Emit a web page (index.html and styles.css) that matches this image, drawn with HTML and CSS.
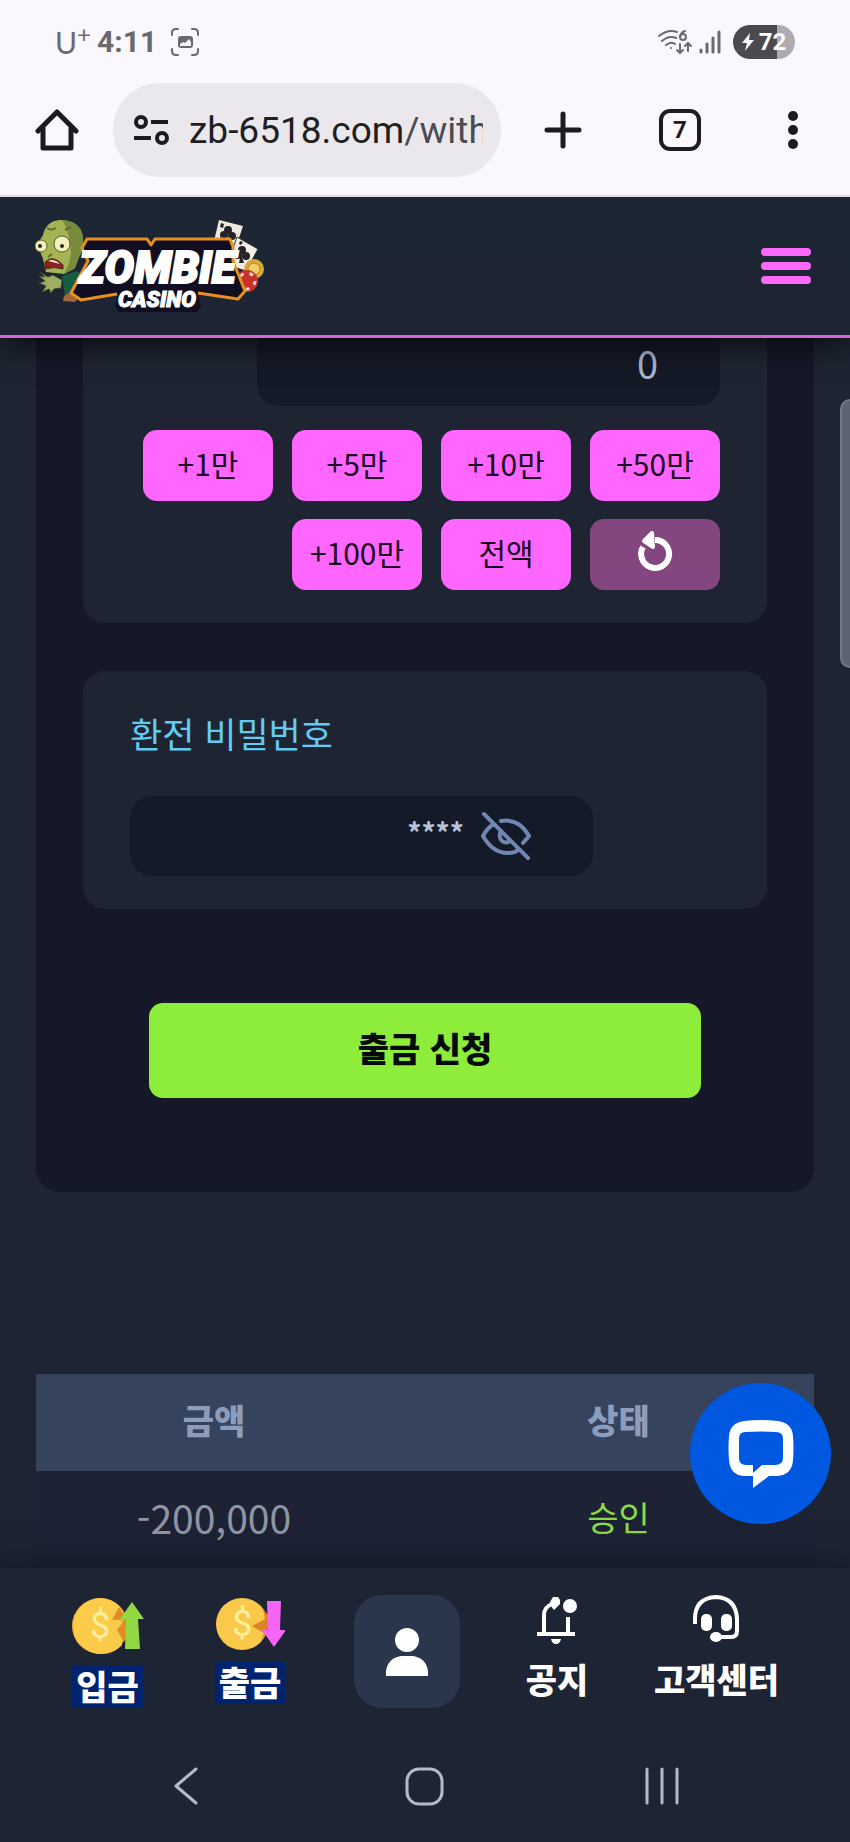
FILE: index.html
```html
<!DOCTYPE html>
<html lang="ko">
<head>
  <meta charset="UTF-8">
  <meta name="viewport" content="width=device-width, initial-scale=1">
  <title>출금 신청</title>
  <link rel="stylesheet" href="styles.css">
</head>
<body>
  <div class="browser">
    <div class="status-bar">
      <span class="carrier">U<sup>+</sup></span>
      <span class="clock">4:11</span>
      <svg class="capture" width="28" height="28" viewBox="0 0 28 28" fill="none" stroke="#6b696d" stroke-width="2" stroke-linecap="round">
        <path d="M1 7V5q0-4 4-4h2M21 1h2q4 0 4 4v2M27 21v2q0 4-4 4h-2M7 27H5q-4 0-4-4v-2"/>
        <rect x="7" y="8" width="15" height="12" rx="3" fill="#6b696d" stroke="none"/>
        <path d="M9 18v-2l3-2 2 1 4-4 2 3v4z" fill="#faf8fc" stroke="none"/>
      </svg>
      <span class="spacer"></span>
      <svg width="34" height="26" viewBox="0 0 34 26" fill="none" stroke="#6b696d" stroke-width="2" stroke-linecap="round">
        <path d="M1 7q9-7 18-4M4 12q7-6 14-3M8 16q5-4 9-1"/>
        <circle cx="13" cy="19" r="1" fill="#6b696d" stroke="none"/>
        <path d="M27 2q-4 1-5 6"/>
        <circle cx="25" cy="8" r="3"/>
        <path d="M22 15v9M19 21l3 3 3-3M30 22v-8M27 17l3-3 3 3"/>
      </svg>
      <svg class="signal" width="22" height="24" viewBox="0 0 22 24" stroke="#6b696d" stroke-width="3" stroke-linecap="round">
        <path d="M2 20v2M8 14v8M14 8v14M20 2v20"/>
      </svg>
      <span class="battery">
        <svg width="12" height="18" viewBox="0 0 12 18" fill="#fff"><path d="M8 0L0 10h5l-2 8 9-11H7z"/></svg>72
      </span>
    </div>
    <div class="toolbar">
      <button class="tool" aria-label="홈">
        <svg width="44" height="44" viewBox="0 0 44 44" fill="none" stroke="#1c1b20" stroke-width="5" stroke-linejoin="round" stroke-linecap="round">
          <path d="M3 23L22 4l19 19M8 20v20h28V20"/>
        </svg>
      </button>
      <a class="omnibox" href="#">
        <svg width="36" height="32" viewBox="0 0 36 32" fill="none" stroke="#1c1b20" stroke-width="4">
          <circle cx="8" cy="8" r="5"/><path d="M18 8h17M1 24h17"/><circle cx="29" cy="24" r="5"/>
        </svg>
        <span class="url">zb-6518.com<span class="path">/withdraw</span></span>
      </a>
      <button class="tool" aria-label="새 탭">
        <svg width="38" height="38" viewBox="0 0 38 38" stroke="#1c1b20" stroke-width="5" stroke-linecap="round"><path d="M19 3v32M3 19h32"/></svg>
      </button>
      <button class="tool tabs" aria-label="탭 7개">7</button>
      <button class="tool" aria-label="메뉴">
        <svg width="30" height="40" viewBox="0 0 30 40" fill="#1c1b20"><circle cx="15" cy="6" r="5"/><circle cx="15" cy="20" r="5"/><circle cx="15" cy="34" r="5"/></svg>
      </button>
    </div>
  </div>

  <header class="site-header">
    <a class="logo" href="#" aria-label="Zombie Casino">
      <svg width="235" height="100" viewBox="0 0 235 100">
        <!-- cards and chips -->
        <path d="M184 4l24 6-8 24-21-9z" fill="#eee9df"/>
        <path d="M202 21l21 12-12 22-19-6z" fill="#f3eee5" stroke="#34302f"/>
        <g fill="#26222a">
          <circle cx="193" cy="14" r="4"/><circle cx="189" cy="19" r="4"/><circle cx="197" cy="20" r="4"/>
          <circle cx="207" cy="34" r="4"/><circle cx="203" cy="39" r="4"/><circle cx="211" cy="40" r="4"/>
          <path d="M206 38l-2 9h5zM186 7l3 1-1 4-3-1zM205 25l3 1-2 3-2-1z"/>
        </g>
        <circle cx="219" cy="53" r="10" fill="#d9a93c"/>
        <circle cx="219" cy="53" r="6" fill="#efcf62" stroke="#b5832a"/>
        <circle cx="212" cy="65" r="11" fill="#c92f2b"/>
        <circle cx="212" cy="65" r="8" fill="none" stroke="#f1d8d0" stroke-width="3" stroke-dasharray="4 6"/>
        <!-- zombie -->
        <path d="M27 60l14-5 10 5-6 22-15-2z" fill="#155c40"/>
        <path d="M5 56l8 5 5-2 9 5-1 8-7 1-3 4-2-4-7 3 4-6-7-3 6-2-6-5 6 1z" fill="#9fae62" stroke="#3f4d2c"/>
        <path d="M8 19Q11 5 25 4q18 0 22 15 3 12-3 22l-4 11-11 6-18-2-3-13-5-13q1-6 5-11z" fill="#a4b455"/>
        <path d="M25 4q20 0 23 16 1 15-5 23l-4 10-10 5q9-15 6-30-2-16-8-24z" fill="#788b3c"/>
        <path d="M12 12q4 3 9 0M17 38l-4 3M30 14l6-3" stroke="#5a6a2d" stroke-width="2" fill="none"/>
        <circle cx="6" cy="30" r="6" fill="#f4efbd" stroke="#56622b"/><circle cx="5" cy="30" r="2" fill="#2a2719"/>
        <circle cx="27" cy="28" r="8" fill="#f4efbd" stroke="#56622b"/><circle cx="27" cy="30" r="2" fill="#2a2719"/>
        <path d="M10 46q8-8 18 3v4q-9-3-18 0z" fill="#8d1f21" stroke="#4a2c1b"/><path d="M13 45q6-3 12 3z" fill="#efe7c5"/>
        <path d="M29 80l6-4 8 6-3 4-12-1z" fill="#a3653b"/>
        <!-- name plate -->
        <path d="M52 23h60l4 5 4-5h75l3 8v14l12 30-7 8-40-6 3 14-4 5H84l-4-6 3-12-37 6-10-7 17-32-6-13z" fill="#100e20"/>
        <path d="M82 78l-36 6-10-7 17-32-6-13 5-9h60l4 6 4-6h75l3 8v14l12 30-7 8-40-6" fill="none" stroke="#e8901f" stroke-width="3" stroke-linejoin="round"/>
        <text class="logo-zombie" x="44" y="67">ZOMBIE</text>
        <text class="logo-casino" x="83" y="91">CASINO</text>
      </svg>
    </a>
    <button class="burger" aria-label="전체 메뉴"><span></span><span></span><span></span></button>
  </header>

  <main>
    <form class="panel">
      <section class="card amount">
        <input class="field amount-input" type="text" value="0" aria-label="출금 금액">
        <div class="quick">
          <button type="button">+1만</button>
          <button type="button">+5만</button>
          <button type="button">+10만</button>
          <button type="button">+50만</button>
          <button type="button">+100만</button>
          <button type="button">전액</button>
          <button type="button" class="reset" aria-label="초기화">
            <svg width="38" height="44" viewBox="0 0 38 44" fill="none" stroke="#fff" stroke-width="6">
              <path d="M7 17a14 14 0 1 0 12-7"/>
              <path d="M16 3L8 11l9 6z" fill="#fff" stroke-width="4" stroke-linejoin="round"/>
            </svg>
          </button>
        </div>
      </section>

      <section class="card">
        <label class="card-title" for="pin">환전 비밀번호</label>
        <div class="field pin-field">
          <input id="pin" type="text" value="****">
          <button type="button" aria-label="비밀번호 보기">
            <svg width="50" height="50" viewBox="0 0 50 50" fill="none" stroke="#7186b0" stroke-width="4" stroke-linecap="round" stroke-linejoin="round">
              <path d="M3 3l44 44M20 10q18-3 28 15l-6 7M13 13Q6 17 2 25q12 21 32 16q2-1 4-3"/>
              <path d="M20 20q-3 6 1 10 4 3 8 0"/>
            </svg>
          </button>
        </div>
      </section>

      <button class="submit" type="submit">출금 신청</button>
    </form>

    <section class="history">
      <div class="table-wrap">
        <table>
          <thead>
            <tr><th class="col-amount">금액</th><th>상태</th></tr>
          </thead>
          <tbody>
            <tr><td>-200,000</td><td class="ok">승인</td></tr>
          </tbody>
        </table>
      </div>
      <button class="chat" aria-label="채팅 상담">
        <svg width="66" height="68" viewBox="0 0 66 68" fill="#fff" fill-rule="evenodd">
          <path d="M16 1Q33-1 50 1q14 2 15 15 1 12 0 24-1 15-16 16h-8L25 68V56h-9Q2 55 1 40 0 28 1 16 2 3 16 1zM17 12q-6 0-6 7v19q0 7 7 7h7v8l9-8h13q8 0 8-7V19q0-7-7-7-15-1-31 0z"/>
        </svg>
      </button>
    </section>
    <div class="scroll-thumb"></div>
  </main>

  <footer class="dock">
    <nav class="menu">
      <a class="item picked" href="#">
        <svg width="72" height="60" viewBox="0 0 72 60">
          <circle cx="28" cy="31" r="28" fill="#f2b33b"/>
          <path d="M28 3a28 28 0 0 1 20 9l-4 12 8 4-2 22A28 28 0 1 1 28 3z" fill="#fbcb49"/>
          <path d="M47 12l-7 13 13-1-8 11 7 12q6-8 4-20z" fill="#e08b25"/>
          <text class="dollar" x="28" y="43">$</text>
          <path d="M60 7l12 17h-6l2 30H53l1-30h-6z" fill="#91d843"/>
        </svg>
        <span>입금</span>
      </a>
      <a class="item picked" href="#">
        <svg width="70" height="56" viewBox="0 0 70 56">
          <circle cx="27" cy="29" r="26" fill="#fbc94a"/>
          <path d="M48 14l2 10-13 7 12 7-3 8q10-14 7-26z" fill="#dc8526"/>
          <text class="dollar" x="27" y="41">$</text>
          <path d="M52 6h14l-1 29h6L59 52 47 35h6z" fill="#f665f6"/>
        </svg>
        <span>출금</span>
      </a>
      <a class="profile" href="#" aria-label="내 정보">
        <svg width="44" height="48" viewBox="0 0 44 48" fill="#fff"><circle cx="22" cy="12" r="12"/><path d="M1 48v-5q2-13 15-15h12q13 2 15 15v5z"/></svg>
      </a>
      <a class="item" href="#">
        <svg width="44" height="53" viewBox="0 0 44 53" fill="none" stroke="#fff" stroke-width="4">
          <path d="M2 39h38M9 38V20q0-8 8-11M33 38V22"/>
          <path d="M15 10V7l3-5h5l2 3v4l-6 6z" fill="#fff" stroke="none"/>
          <path d="M16 44h10q-1 5-5 5t-5-5z" fill="#fff" stroke="none"/>
          <circle cx="35" cy="11" r="7" fill="#fff" stroke="none"/>
        </svg>
        <span>공지</span>
      </a>
      <a class="item" href="#">
        <svg width="46" height="53" viewBox="0 0 46 53" fill="none" stroke="#fff" stroke-width="4">
          <path d="M2 29v-5Q2 3 23 2q20 1 21 22v12q0 6-6 6H24"/>
          <g fill="#fff" stroke="none"><rect x="8" y="19" width="11" height="17" rx="5"/><rect x="28" y="19" width="11" height="17" rx="5"/><ellipse cx="23" cy="42" rx="6" ry="5"/></g>
        </svg>
        <span>고객센터</span>
      </a>
    </nav>
    <div class="system-nav">
      <button aria-label="뒤로"><svg width="40" height="40" viewBox="0 0 40 40"><path d="M30 3L10 20l20 17"/></svg></button>
      <button aria-label="홈 화면"><svg width="40" height="40" viewBox="0 0 40 40"><rect x="2" y="3" width="35" height="35" rx="12"/></svg></button>
      <button aria-label="최근 앱"><svg width="40" height="40" viewBox="0 0 40 40"><path d="M3 3v34M18 3v34M33 3v34"/></svg></button>
    </div>
  </footer>
</body>
</html>
```
FILE: styles.css
```css
* {
  box-sizing: border-box;
}
body {
  margin: 0;
  font-family: 'Noto Sans CJK KR', sans-serif;
  background: #1e2432;
  color: #fff;
}
button {
  padding: 0;
  border: none;
  background: none;
  font-family: inherit;
  cursor: pointer;
}
a {
  color: inherit;
  text-decoration: none;
}
svg {
  display: block;
}

/* browser bars */
.browser {
  position: relative;
  z-index: 3;
  background: #faf8fc;
  border-bottom: 2px solid #dadde7;
  font-family: 'Roboto', sans-serif;
}
.status-bar {
  display: flex;
  align-items: center;
  height: 83px;
  padding: 0 55px;
  color: #6b696d;
}
.carrier {
  font-family: 'Lato', sans-serif;
  font-size: 30px;
  line-height: 28px;
}
.carrier sup {
  font-size: 24px;
  line-height: 0;
}
.clock {
  margin-left: 6px;
  font-size: 30px;
  font-weight: bold;
}
.capture {
  margin-left: 14px;
}
.spacer {
  flex: 1;
}
.signal {
  margin: 0 12px 0 7px;
}
.battery {
  display: flex;
  align-items: center;
  justify-content: center;
  gap: 5px;
  width: 62px;
  height: 34px;
  border-radius: 17px;
  background: linear-gradient(to right, #4c4a4e 71%, #adabae 71%);
  color: #fff;
  font-size: 24px;
  font-weight: bold;
}
.toolbar {
  display: flex;
  align-items: center;
  padding: 0 42px 18px 35px;
}
.omnibox {
  display: flex;
  flex: 1;
  align-items: center;
  gap: 20px;
  min-width: 0;
  height: 94px;
  margin: 0 43px 0 34px;
  padding: 0 18px 0 20px;
  border-radius: 47px;
  background: #eae8ed;
}
.omnibox svg {
  flex-shrink: 0;
}
.url {
  overflow: hidden;
  color: #1f1e23;
  font-size: 37px;
  white-space: nowrap;
}
.path {
  color: #4c4b50;
}
.tool + .tool {
  margin-left: 77px;
}
.tabs {
  width: 42px;
  height: 42px;
  border: 4px solid #1c1b20;
  border-radius: 11px;
  color: #1c1b20;
  font-family: 'Roboto', sans-serif;
  font-size: 24px;
  font-weight: bold;
}

/* site header */
.site-header {
  position: relative;
  z-index: 2;
  display: flex;
  align-items: center;
  justify-content: space-between;
  height: 141px;
  padding: 0 39px 0 35px;
  border-bottom: 3px solid #d766d3;
  background: linear-gradient(#1c2733, #1e2433);
  box-shadow: 0 6px 30px rgba(0, 0, 0, 0.7);
}
.logo-zombie,
.logo-casino {
  fill: #fff;
  stroke: #fff;
  font-family: 'Roboto', sans-serif;
  font-weight: 900;
  font-style: italic;
}
.logo-zombie {
  font-size: 44px;
  stroke-width: 2px;
}
.logo-casino {
  font-size: 22px;
}
.burger {
  display: flex;
  flex-direction: column;
  gap: 6px;
  width: 50px;
}
.burger span {
  height: 8px;
  border-radius: 4px;
  background: #fc69fb;
}

/* withdraw form */
main {
  position: relative;
}
.panel {
  margin: -12px 36px 0;
  padding: 0 47px 94px;
  border-radius: 0 0 24px 24px;
  background: #151827;
}
.card {
  margin-bottom: 48px;
  padding: 37px 47px 33px;
  border-radius: 22px;
  background: #1f2433;
}
.amount {
  display: flex;
  flex-direction: column;
  align-items: flex-end;
  gap: 24px;
  padding-top: 0;
  border-radius: 0 0 22px 22px;
}
.field {
  width: 100%;
  max-width: 463px;
  height: 80px;
  border: none;
  border-radius: 22px;
  background: #151a28;
}
.amount-input {
  padding: 0 62px 8px;
  color: #a8b7cf;
  font-family: inherit;
  font-size: 38px;
  text-align: right;
}
.quick {
  display: flex;
  flex-wrap: wrap;
  justify-content: flex-end;
  gap: 18px 19px;
  width: 100%;
}
.quick button {
  display: flex;
  align-items: center;
  justify-content: center;
  width: 130px;
  height: 71px;
  padding-bottom: 6px;
  border-radius: 14px;
  background: #ff66ff;
  color: #1b0820;
  font-size: 30px;
}
.quick .reset {
  background: #83467e;
}
.card-title {
  display: block;
  margin-bottom: 38px;
  color: #62cbf3;
  font-size: 35px;
  line-height: 50px;
}
.pin-field {
  display: flex;
  align-items: center;
  gap: 17px;
  padding-right: 62px;
}
.pin-field input {
  flex: 1;
  min-width: 0;
  padding: 0 0 8px;
  border: none;
  background: none;
  color: #b5c2d8;
  font-family: inherit;
  font-size: 28px;
  font-weight: bold;
  text-align: right;
}
.submit {
  display: block;
  width: calc(100% - 132px);
  height: 95px;
  margin: 94px auto 0;
  padding-bottom: 6px;
  border-radius: 14px;
  background: #8eec3b;
  color: #050b08;
  font-size: 34px;
  font-weight: 900;
}

/* history table, cut at the right edge like a scrolled list */
.history {
  position: relative;
  margin-top: 182px;
  padding: 0 36px;
}
.table-wrap {
  overflow: hidden;
}
table {
  width: 104%;
  border-collapse: collapse;
  table-layout: fixed;
  background: #1d2234;
}
th,
td {
  height: 97px;
  padding: 0 0 6px;
  text-align: center;
  font-size: 34px;
}
th {
  background: #35435d;
  color: #8d9cba;
  font-weight: 900;
}
td {
  color: #9194a4;
  font-size: 39px;
}
.col-amount {
  width: 44%;
}
td.ok {
  color: #89dc45;
  font-size: 34px;
}
.chat {
  position: absolute;
  top: 9px;
  right: 19px;
  z-index: 3;
  display: flex;
  align-items: center;
  justify-content: center;
  width: 141px;
  height: 141px;
  border-radius: 50%;
  background: #0058e0;
}
.scroll-thumb {
  position: absolute;
  top: 73px;
  right: 0;
  width: 10px;
  height: 269px;
  border: 2px solid #747985;
  border-right: none;
  border-radius: 10px 0 0 10px;
  background: #5d6370;
}

/* bottom menu */
.dock {
  position: relative;
  background: #1d2433;
  box-shadow: 0 -4px 30px rgba(14, 18, 34, 0.7);
}
.menu {
  display: flex;
  justify-content: space-between;
  padding: 27px 71px 0 69px;
}
.item {
  display: flex;
  flex-direction: column;
  align-items: center;
  gap: 11px;
  font-size: 34px;
  font-weight: 900;
  line-height: 40px;
}
.item span {
  height: 42px;
}
.picked {
  min-width: 77px;
}
.picked span {
  padding: 0 4px;
  background: #00236f;
}
.dollar {
  fill: #fff0a0;
  font-family: 'Roboto', sans-serif;
  font-size: 36px;
  font-weight: normal;
  text-anchor: middle;
}
.profile {
  display: flex;
  align-items: center;
  justify-content: center;
  width: 106px;
  height: 113px;
  border-radius: 28px;
  background: #2a364c;
}
.system-nav {
  display: flex;
  justify-content: space-between;
  padding: 58px 166px 36px;
}
.system-nav svg {
  fill: none;
  stroke: #b4bac8;
  stroke-width: 3px;
  stroke-linecap: round;
  stroke-linejoin: round;
}
```
